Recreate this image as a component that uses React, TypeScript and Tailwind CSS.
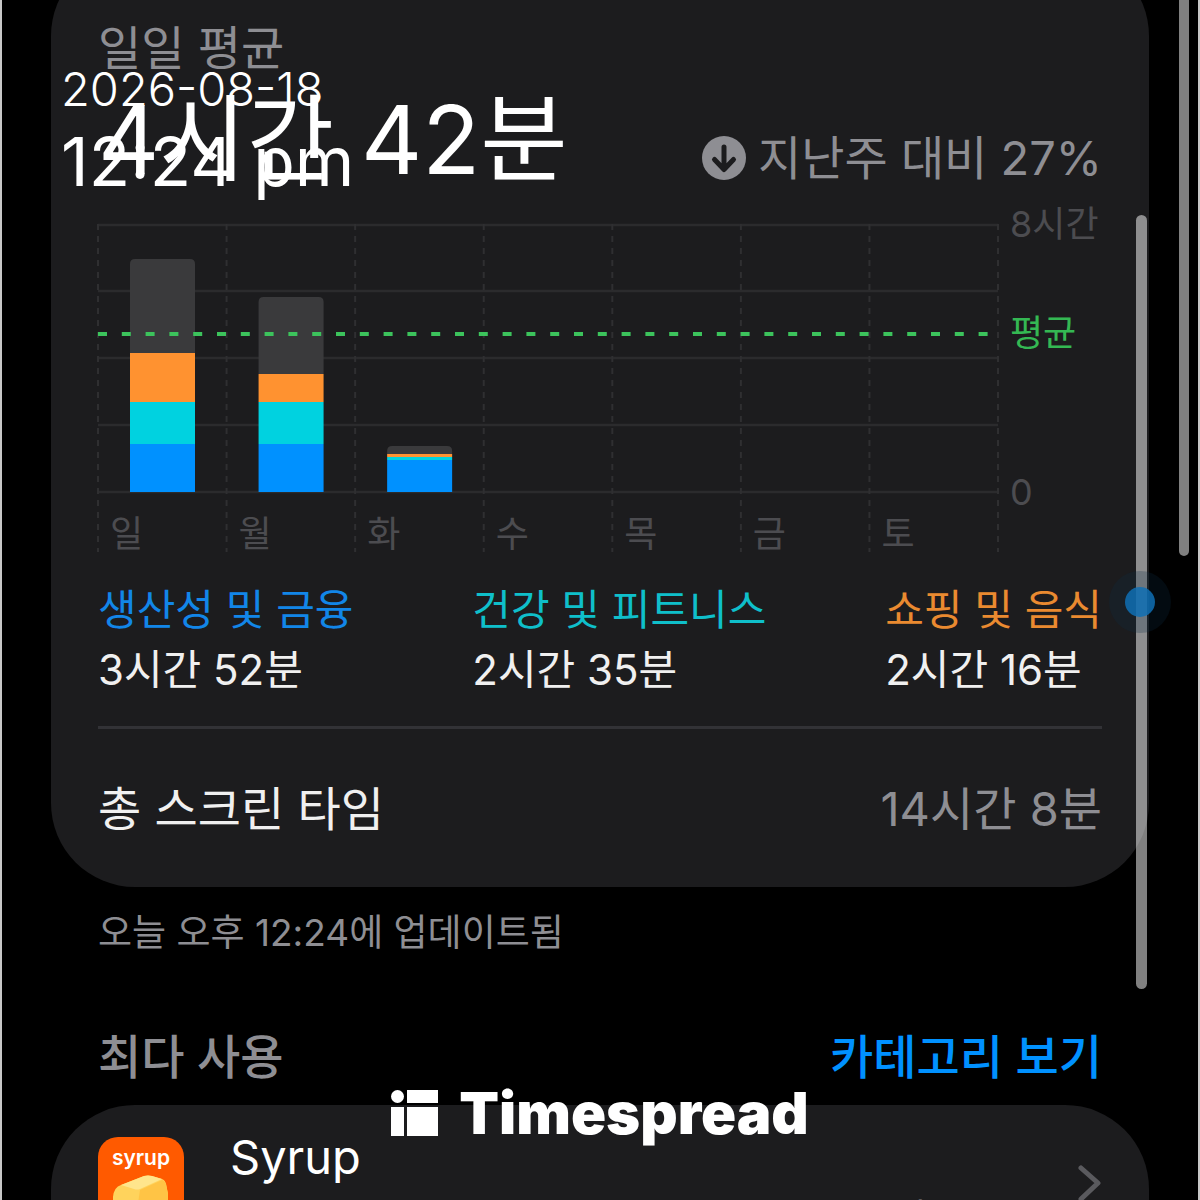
import React from 'react';

interface Usage {
  day: string;
  other: number;
  food: number;
  health: number;
  work: number;
}

interface Category {
  name: string;
  time: string;
  color: string;
}

// Segment heights are in chart units, the plot is 268 units tall
const usage: Usage[] = [
  { day: '일', other: 94, food: 49, health: 42, work: 48 },
  { day: '월', other: 77, food: 28, health: 42, work: 48 },
  { day: '화', other: 8, food: 3, health: 3, work: 32 },
  { day: '수', other: 0, food: 0, health: 0, work: 0 },
  { day: '목', other: 0, food: 0, health: 0, work: 0 },
  { day: '금', other: 0, food: 0, health: 0, work: 0 },
  { day: '토', other: 0, food: 0, health: 0, work: 0 },
];

const categories: Category[] = [
  { name: '생산성 및 금융', time: '3시간 52분', color: 'text-[#1286e8]' },
  { name: '건강 및 피트니스', time: '2시간 35분', color: 'text-[#0fbfca]' },
  { name: '쇼핑 및 음식', time: '2시간 16분', color: 'text-[#ea8a30]' },
];

const COLUMN = 900 / 7;
const BASE = 268;

const UsageBar: React.FC<{ item: Usage; index: number }> = ({ item, index }) => {
  const x = index * COLUMN + 32;
  const total = item.other + item.food + item.health + item.work;
  if (total === 0) return null;
  const colored = item.food + item.health + item.work;
  const top = BASE - total;
  return (
    <g>
      <path
        d={`M${x} ${BASE - colored}V${top + 5}q0 -5 5 -5h55q5 0 5 5V${BASE - colored}z`}
        fill="#3a3a3c"
      />
      <rect x={x} y={BASE - colored} width="65" height={item.food} fill="#ff9230" />
      <rect x={x} y={BASE - item.work - item.health} width="65" height={item.health} fill="#00d2e0" />
      <rect x={x} y={BASE - item.work} width="65" height={item.work} fill="#0091ff" />
    </g>
  );
};

const UsageChart: React.FC = () => (
  <div className="mt-7 flex gap-3">
    <div className="relative flex-1">
      <svg viewBox="0 0 900 328" className="block w-full overflow-visible">
        {[1, 67, 134, 201, 268].map((y) => (
          <line key={y} x1="0" x2="900" y1={y} y2={y} stroke="#2b2b2d" strokeWidth="2.5" />
        ))}
        {[0, 1, 2, 3, 4, 5, 6, 7].map((i) => (
          <line
            key={i}
            x1={i * COLUMN}
            x2={i * COLUMN}
            y1="0"
            y2="328"
            stroke="#2f2f31"
            strokeWidth="2"
            strokeDasharray="6 6"
          />
        ))}
        {usage.map((item, i) => (
          <UsageBar key={item.day} item={item} index={i} />
        ))}
        <line x1="0" x2="893" y1="110" y2="110" stroke="#3cc35c" strokeWidth="4" strokeDasharray="9 14.8" />
      </svg>
      <div className="absolute inset-x-0 bottom-0 grid grid-cols-7 text-[36px] leading-9 text-[#4c4c50]">
        {usage.map((item) => (
          <span key={item.day} className="pl-3">{item.day}</span>
        ))}
      </div>
    </div>
    <div className="relative w-[92px] text-[36px] leading-10 whitespace-nowrap text-[#4c4c50]">
      <span className="absolute -top-5">8시간</span>
      <span className="absolute top-[89px] text-[#34b853]">평균</span>
      <span className="absolute top-[248px]">0</span>
    </div>
  </div>
);

const DownBadge: React.FC = () => (
  <svg viewBox="0 0 44 44" className="h-11 w-11" aria-hidden="true">
    <circle cx="22" cy="22" r="22" fill="#8e8e93" />
    <path
      d="M22 11v22M12.500 23.500L22 33.500 31.500 23.500"
      fill="none"
      stroke="#1c1c1e"
      strokeWidth="5"
      strokeLinecap="round"
      strokeLinejoin="round"
    />
  </svg>
);

const SyrupIcon: React.FC = () => (
  <svg viewBox="0 0 86 86" className="h-[86px] w-[86px] shrink-0" aria-hidden="true">
    <rect width="86" height="86" rx="20" fill="#ff5a00" />
    <text x="43" y="28" textAnchor="middle" fontSize="21" fontWeight="600" fill="#fff" fontFamily="Inter">
      syrup
    </text>
    <path d="M15 60Q16 50 23 48L46 39Q50 38 54 39L64 42Q67 43 68 47L70 57V80H15z" fill="#ffd35c" />
    <path d="M23 48L46 39Q50 38 54 39L64 42 42 52Q39 53 36 52z" fill="#ffe58c" />
    <path d="M42 53L64 43Q67 44 68 47L70 57V80H38z" fill="#ffc445" />
  </svg>
);

const StampOverlay: React.FC = () => (
  <div className="absolute top-[59px] left-[59px] text-white">
    <p className="text-[47px] leading-[60px] font-light">2026-08-18</p>
    <p className="text-[68px] leading-[84px]">12:24 pm</p>
  </div>
);

const Watermark: React.FC = () => (
  <div className="absolute inset-x-0 top-[1080px] flex items-center justify-center gap-5 text-white">
    <svg viewBox="0 0 48 48" className="h-12 w-12" aria-hidden="true">
      <circle cx="6.500" cy="7.500" r="6.500" fill="currentColor" />
      <path d="M0 18h13v29H0zM16 1h31v13H16zM16 18h31v29H16z" fill="currentColor" />
    </svg>
    <span className="text-[58px] leading-[66px] font-black">Timespread</span>
  </div>
);

const App: React.FC = () => {
  return (
    <div className="relative h-screen overflow-hidden border-x-2 border-[#c8c8c8] bg-black font-['Inter','Noto_Sans_CJK_KR',sans-serif] text-[47px] leading-[56px] text-[#8e8e93]">
      <main className="px-[49px]">
        <section className="-mt-12 rounded-[84px] bg-[#1c1c1e] px-[47px] pt-[68px] pb-[50px]">
          <h2>일일 평균</h2>
          <div className="mt-2 flex items-end justify-between">
            <p className="text-[95px] leading-[112px] text-white">4시간 42분</p>
            <p className="mb-[10px] flex items-center gap-3">
              <DownBadge />
              지난주 대비 27%
            </p>
          </div>
          <UsageChart />
          <div className="mt-7 flex justify-between text-[42px] leading-[60px]">
            {categories.map((category) => (
              <div key={category.name}>
                <p className={category.color}>{category.name}</p>
                <p className="text-[#f0f0f0]">{category.time}</p>
              </div>
            ))}
          </div>
          <div className="mt-[26px] flex justify-between border-t-3 border-[#323236] pt-[52px]">
            <span className="text-[#f0f0f0]">총 스크린 타임</span>
            <span>14시간 8분</span>
          </div>
        </section>
        <p className="mt-[18px] px-[47px] text-[37px]">오늘 오후 12:24에 업데이트됨</p>
        <div className="mt-[68px] flex justify-between px-[47px] font-medium">
          <h2>최다 사용</h2>
          <button type="button" className="text-[#0091ff]">카테고리 보기</button>
        </div>
        <section className="mt-5 rounded-t-[84px] bg-[#1c1c1e] px-[47px] pt-8 pb-10">
          <button type="button" className="flex w-full gap-[46px] text-left">
            <SyrupIcon />
            <span className="-mt-2 flex flex-1 flex-col gap-1">
              <span className="text-white">Syrup</span>
              <span className="pr-6 text-right text-[36px]">2시간 16분</span>
            </span>
            <svg viewBox="0 0 24 44" className="mt-7 h-11 w-6" aria-hidden="true">
              <path d="M3 3L20 18 3 34" fill="none" stroke="#5a5a5e" strokeWidth="5" strokeLinecap="round" strokeLinejoin="round" />
            </svg>
          </button>
        </section>
      </main>
      <div className="absolute top-0 right-[9px] h-[556px] w-[10px] rounded-b-full bg-[#808080]" />
      <div className="absolute top-[215px] right-[51px] h-[774px] w-[11px] rounded-full bg-white/50" />
      <div className="absolute top-[571px] right-[27px] flex h-[62px] w-[62px] items-center justify-center rounded-full bg-[#0a2a44]/25">
        <span className="h-[30px] w-[30px] rounded-full bg-[#0f70b5]/85" />
      </div>
      <StampOverlay />
      <Watermark />
    </div>
  );
};

export default App;
